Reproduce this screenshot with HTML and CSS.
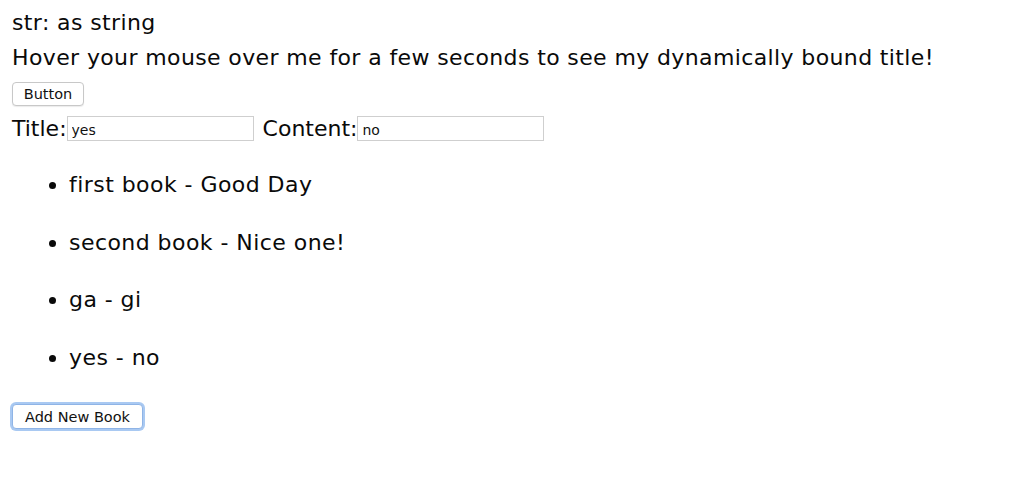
FILE: index.html
```html
<!DOCTYPE html>
<html>
<head>
<meta charset="utf-8">
<link rel="stylesheet" href="styles.css">
</head>
<body>
<div class="line">str: as string</div>
<div class="line">Hover your mouse over me for a few seconds to see my dynamically bound title!</div>
<button class="btn btn-plain">Button</button>
<div class="form-row">
  <label class="lbl">Title:</label><input class="field" type="text" value="yes">
  <label class="lbl lbl-gap">Content:</label><input class="field" type="text" value="no">
</div>
<ul class="books">
  <li class="book">first book - Good Day</li>
  <li class="book">second book - Nice one!</li>
  <li class="book">ga - gi</li>
  <li class="book">yes - no</li>
</ul>
<button class="btn btn-focus">Add New Book</button>
</body>
</html>
```
FILE: styles.css
```css
html, body {
  margin: 0;
  background: #fff;
}
body {
  padding: 5px 12px;
  font-family: "DejaVu Sans", sans-serif;
  font-size: 22px;
  color: #0a0a0a;
}
.line {
  height: 35px;
  line-height: 35px;
  white-space: nowrap;
  letter-spacing: 0.38px;
}
.btn {
  display: block;
  font-family: "DejaVu Sans", sans-serif;
  font-size: 14.5px;
  color: #111;
  background: #fff;
  border: 1px solid #c8c8c8;
  border-radius: 4px;
  height: 24px;
  padding: 0 4px;
  box-shadow: 0 1px 1px rgba(0,0,0,0.08);
}
.btn-plain {
  margin-top: 7px;
  width: 72px;
}
.form-row {
  display: flex;
  align-items: center;
  height: 35px;
  margin-top: 5px;
}
.lbl {
  line-height: 35px;
  letter-spacing: 0;
}
.lbl-gap {
  margin-left: 9px;
}
.field {
  box-sizing: border-box;
  width: 187px;
  height: 25px;
  margin-left: 0;
  border: 1px solid #cfcfcf;
  padding: 2px 4px 0;
  font-family: "DejaVu Sans", sans-serif;
  font-size: 14px;
  color: #111;
}
.books {
  margin: 21px 0 0;
  padding-left: 57px;
  letter-spacing: 0.45px;
}
.book {
  line-height: 35px;
  height: 35px;
  margin-bottom: 22.5px;
}
.btn-focus {
  margin-top: 29.5px;
  width: 131px;
  height: 25px;
  border: 1px solid #8fb4e6;
  box-shadow: 0 0 0 2px #a9c9f2;
  border-radius: 4px;
}
```
